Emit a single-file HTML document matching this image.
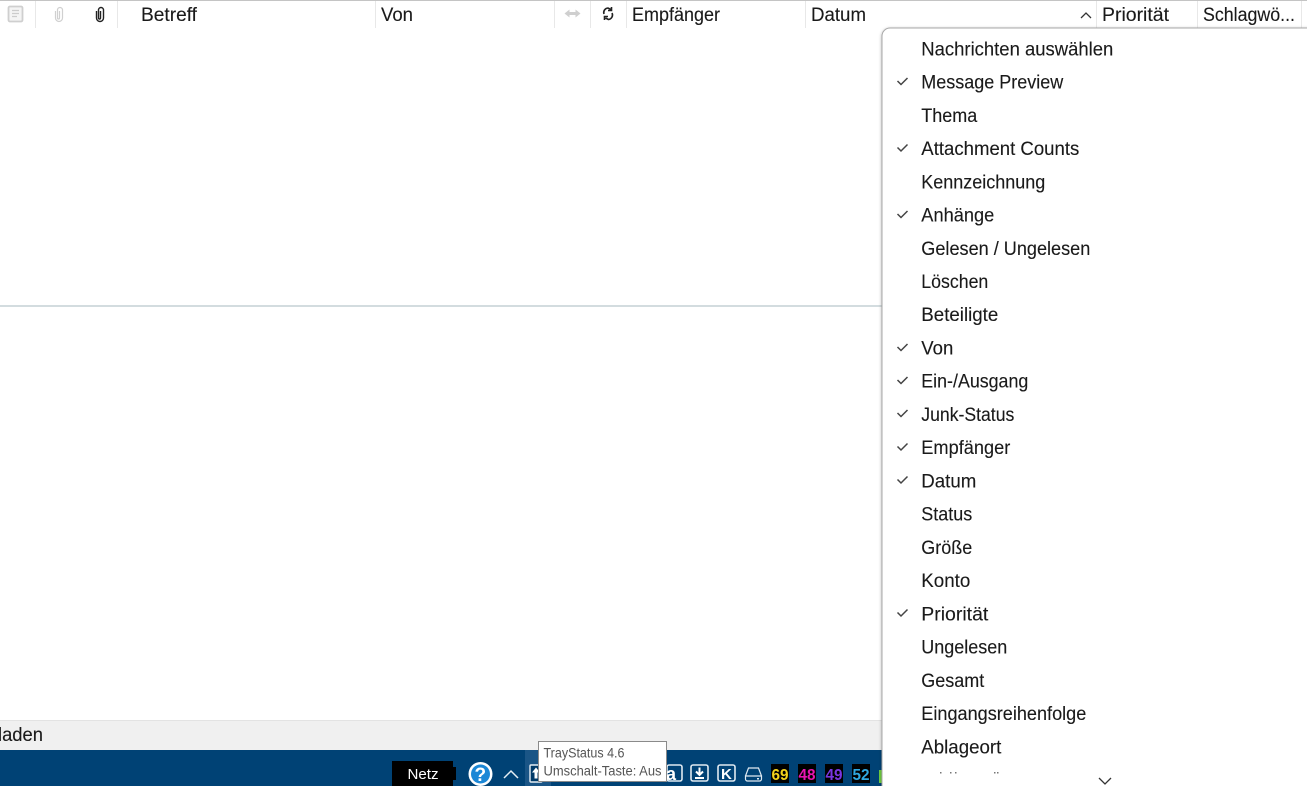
<!DOCTYPE html>
<html><head><meta charset="utf-8">
<style>
html,body{margin:0;padding:0;background:#fff;width:1307px;height:786px;overflow:hidden}
svg{position:absolute;left:0;top:0;display:block}
text{font-family:"Liberation Sans",sans-serif;font-size:19px;fill:#1a1a1a;stroke:#1a1a1a;stroke-width:.12px}
.n text{stroke:none;font-size:16px;font-weight:bold}
</style></head><body>
<svg width="1307" height="786" viewBox="0 0 1307 786" xmlns="http://www.w3.org/2000/svg">
<defs>
<filter id="sh" x="-5%" y="-5%" width="110%" height="110%"><feDropShadow dx="0" dy="1" stdDeviation="1.5" flood-color="#000" flood-opacity=".3"/></filter>
</defs>
<rect width="1307" height="786" fill="#fff"/>
<!-- header -->
<rect x="0" y="0" width="1307" height="1" fill="#c4c4c4"/>
<g fill="#e8e8e8">
<rect x="35" y="1" width="1" height="27"/><rect x="117" y="1" width="1" height="27"/><rect x="375" y="1" width="1" height="27"/><rect x="554" y="1" width="1" height="27"/><rect x="590" y="1" width="1" height="27"/><rect x="626" y="1" width="1" height="27"/><rect x="805" y="1" width="1" height="27"/><rect x="1096" y="1" width="1" height="27"/><rect x="1197" y="1" width="1" height="27"/><rect x="1301" y="1" width="1" height="27"/>
</g>
<!-- header icons -->
<rect x="8.500" y="6.500" width="14" height="15" rx="1.500" fill="#f4f4f4" stroke="#cfcfcf" stroke-width="1.800"/>
<path d="M12 10.500h7M12 13.500h7M12 16.500h5" stroke="#cccccc" stroke-width="1.300" fill="none"/>
<path d="M55.500 11v7a3.500 3.500 0 0 0 7 0V10a2.500 2.500 0 0 0-5 0v8a1 1 0 0 0 2 0v-7" fill="none" stroke="#d0d0d0" stroke-width="1.200"/>
<path d="M96.500 11v7a3.500 3.500 0 0 0 7 0V10a2.500 2.500 0 0 0-5 0v8a1 1 0 0 0 2 0v-7" fill="none" stroke="#222" stroke-width="1.400"/>
<path d="M567 13.500h11" stroke="#cfcfcf" stroke-width="3" fill="none"/>
<path d="M569.500 9.500l-5 4 5 4zM575.500 9.500l5 4-5 4z" fill="#cfcfcf"/>
<path d="M604 14a4.500 4.500 0 0 1 4-6l3 1.500M612 13a4.500 4.500 0 0 1-3.500 6.500l-3-1.500M611.500 7v3.500h-3.500M604.500 20v-3.500h3.500" fill="none" stroke="#222" stroke-width="1.600"/>
<text x="141" y="20.800" textLength="56" lengthAdjust="spacingAndGlyphs">Betreff</text>
<text x="381" y="20.800" textLength="32" lengthAdjust="spacingAndGlyphs">Von</text>
<text x="632" y="20.800" textLength="88" lengthAdjust="spacingAndGlyphs">Empfänger</text>
<text x="811" y="20.800" textLength="55" lengthAdjust="spacingAndGlyphs">Datum</text>
<path d="M1081 18l5-5 5 5" fill="none" stroke="#333" stroke-width="1.300"/>
<text x="1102" y="20.800" textLength="67" lengthAdjust="spacingAndGlyphs">Priorität</text>
<text x="1203" y="20.800" textLength="92" lengthAdjust="spacingAndGlyphs">Schlagwö...</text>
<!-- splitter -->
<rect x="0" y="305" width="882" height="2" fill="#d3dcdf"/>
<!-- status bar -->
<rect x="0" y="720" width="882" height="30" fill="#f0f0f0"/>
<rect x="0" y="720" width="882" height="1" fill="#e3e3e3"/>
<text x="-2" y="741" textLength="45" lengthAdjust="spacingAndGlyphs">laden</text>
<!-- taskbar -->
<rect x="0" y="750" width="882" height="36" fill="#004275"/>
<rect x="525" y="750" width="26" height="36" fill="#1a5586"/>
<rect x="392" y="761" width="61" height="25" fill="#000"/>
<rect x="453" y="767" width="3" height="13" fill="#000"/>
<text x="407.500" y="779" style="font-size:15px;fill:#fff;stroke:none" textLength="31" lengthAdjust="spacingAndGlyphs">Netz</text>
<circle cx="480.500" cy="774" r="12" fill="#fff"/>
<circle cx="480.500" cy="774" r="9.500" fill="#1b87d6"/>
<text x="474.500" y="781" style="font-size:19px;font-weight:bold;fill:#fff;stroke:none">?</text>
<path d="M504 778l7-7 7 7" fill="none" stroke="#e6eef4" stroke-width="1.500"/>
<rect x="530" y="765" width="12" height="17" rx="1" fill="#003a68" stroke="#e6eef4" stroke-width="1.400"/>
<path d="M536 767.500l-4 5h2.500v6h3v-6h2.500z" fill="#fff"/>
<rect x="667" y="765" width="15" height="16" rx="2" fill="none" stroke="#dfe9f1" stroke-width="1.600"/>
<text x="666" y="780" style="font-size:18px;font-weight:bold;fill:#fff;stroke:none">a</text>
<rect x="691" y="765" width="17" height="16" rx="2" fill="none" stroke="#dfe9f1" stroke-width="1.600"/>
<path d="M699.500 767.500v7M696 771.500l3.500 3.500 3.500-3.500M695 778h9" fill="none" stroke="#fff" stroke-width="2"/>
<rect x="718" y="765" width="17" height="16" rx="2" fill="none" stroke="#dfe9f1" stroke-width="1.600"/>
<text x="721" y="779" style="font-size:15px;font-weight:bold;fill:#fff;stroke:none">K</text>
<path d="M745.500 776l3-8h10l3 8M745.500 776v3a2 2 0 0 0 2 2h12a2 2 0 0 0 2-2v-3z" fill="none" stroke="#dfe9f1" stroke-width="1.200"/>
<rect x="757" y="778" width="2" height="1.500" fill="#dfe9f1"/>
<g class="n">
<rect x="771" y="764" width="18" height="19" fill="#000"/>
<text x="771.500" y="780" style="fill:#f2d21b" textLength="17" lengthAdjust="spacingAndGlyphs">69</text>
<rect x="798" y="764" width="18" height="19" fill="#000"/>
<text x="798.500" y="780" style="fill:#e815b0" textLength="17" lengthAdjust="spacingAndGlyphs">48</text>
<rect x="825" y="764" width="18" height="19" fill="#000"/>
<text x="825.500" y="780" style="fill:#7a35e0" textLength="17" lengthAdjust="spacingAndGlyphs">49</text>
<rect x="852" y="764" width="18" height="19" fill="#000"/>
<text x="852.500" y="780" style="fill:#2fa8e0" textLength="17" lengthAdjust="spacingAndGlyphs">52</text>
</g>
<rect x="879" y="770" width="3" height="13" fill="#6fcf3f"/>
<!-- tooltip -->
<rect x="538.500" y="741.500" width="128" height="40" fill="#fff" stroke="#8a8a8a"/>
<text x="543.500" y="757.500" style="font-size:13.500px;fill:#555;stroke:none" textLength="81" lengthAdjust="spacingAndGlyphs">TrayStatus 4.6</text>
<text x="543.500" y="775.500" style="font-size:13.500px;fill:#555;stroke:none" textLength="118" lengthAdjust="spacingAndGlyphs">Umschalt-Taste: Aus</text>
<!-- menu -->
<path d="M882 800V36a8 8 0 0 1 8-8H1320V800z" fill="#fff" stroke="#a8a8a8" stroke-width="1" filter="url(#sh)"/>
<g>
<text x="921.300" y="55.300" textLength="192" lengthAdjust="spacingAndGlyphs">Nachrichten auswählen</text>
<text x="921.300" y="88.600" textLength="142" lengthAdjust="spacingAndGlyphs">Message Preview</text>
<text x="921.300" y="121.800" textLength="56" lengthAdjust="spacingAndGlyphs">Thema</text>
<text x="921.300" y="155" textLength="158" lengthAdjust="spacingAndGlyphs">Attachment Counts</text>
<text x="921.300" y="188.300" textLength="124" lengthAdjust="spacingAndGlyphs">Kennzeichnung</text>
<text x="921.300" y="221.500" textLength="73" lengthAdjust="spacingAndGlyphs">Anhänge</text>
<text x="921.300" y="254.800" textLength="169" lengthAdjust="spacingAndGlyphs">Gelesen / Ungelesen</text>
<text x="921.300" y="288" textLength="67" lengthAdjust="spacingAndGlyphs">Löschen</text>
<text x="921.300" y="321.200" textLength="77" lengthAdjust="spacingAndGlyphs">Beteiligte</text>
<text x="921.300" y="354.500" textLength="32" lengthAdjust="spacingAndGlyphs">Von</text>
<text x="921.300" y="387.700" textLength="107" lengthAdjust="spacingAndGlyphs">Ein-/Ausgang</text>
<text x="921.300" y="420.900" textLength="93" lengthAdjust="spacingAndGlyphs">Junk-Status</text>
<text x="921.300" y="454.200" textLength="89" lengthAdjust="spacingAndGlyphs">Empfänger</text>
<text x="921.300" y="487.400" textLength="55" lengthAdjust="spacingAndGlyphs">Datum</text>
<text x="921.300" y="520.700" textLength="51" lengthAdjust="spacingAndGlyphs">Status</text>
<text x="921.300" y="553.900" textLength="51" lengthAdjust="spacingAndGlyphs">Größe</text>
<text x="921.300" y="587.100" textLength="49" lengthAdjust="spacingAndGlyphs">Konto</text>
<text x="921.300" y="620.400" textLength="67" lengthAdjust="spacingAndGlyphs">Priorität</text>
<text x="921.300" y="653.600" textLength="86" lengthAdjust="spacingAndGlyphs">Ungelesen</text>
<text x="921.300" y="686.800" textLength="63" lengthAdjust="spacingAndGlyphs">Gesamt</text>
<text x="921.300" y="720.100" textLength="165" lengthAdjust="spacingAndGlyphs">Eingangsreihenfolge</text>
<text x="921.300" y="753.300" textLength="80" lengthAdjust="spacingAndGlyphs">Ablageort</text>
</g>
<!-- checks -->
<g fill="none" stroke="#444" stroke-width="1.500">
<path d="M897.500 81l3.500 3.500 6.500-6.500"/>
<path d="M897.500 147.500l3.500 3.500 6.500-6.500"/>
<path d="M897.500 214l3.500 3.500 6.500-6.500"/>
<path d="M897.500 347l3.500 3.500 6.500-6.500"/>
<path d="M897.500 380l3.500 3.500 6.500-6.500"/>
<path d="M897.500 413l3.500 3.500 6.500-6.500"/>
<path d="M897.500 446.500l3.500 3.500 6.500-6.500"/>
<path d="M897.500 479.500l3.500 3.500 6.500-6.500"/>
<path d="M897.500 612.500l3.500 3.500 6.500-6.500"/>
</g>
<!-- clipped row fragments and scroll chevron -->
<g fill="#777">
<rect x="940" y="772" width="1.500" height="1.500"/><rect x="950" y="772" width="1.500" height="1.500"/><rect x="955" y="772" width="1.500" height="1.500"/><rect x="994" y="772" width="1.500" height="1.500"/><rect x="997" y="772" width="1.500" height="1.500"/>
</g>
<path d="M1099 778l6 6 6-6" fill="none" stroke="#333" stroke-width="1.300"/>
</svg>
</body></html>
